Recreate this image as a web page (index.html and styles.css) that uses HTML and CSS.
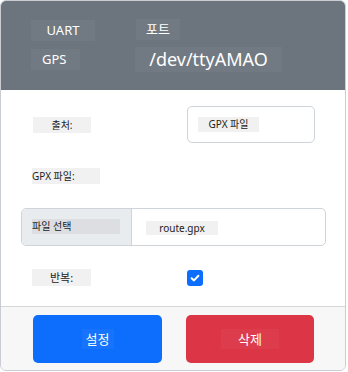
FILE: index.html
```html
<!DOCTYPE html>
<html lang="ko">
  <head>
    <meta charset="UTF-8" />
    <meta name="viewport" content="width=device-width, initial-scale=1.0" />
    <title>GPS 설정</title>
    <link rel="stylesheet" href="styles.css">
  </head>
  <body>
    <div class="card">
      <div class="card-header">
        <div class="head-row">
          <span class="tag tag-uart">UART</span>
          <span class="tag tag-port">포트</span>
        </div>
        <div class="head-row">
          <span class="tag tag-gps">GPS</span>
          <span class="tag tag-dev">/dev/ttyAMAO</span>
        </div>
      </div>

      <div class="card-body">
        <div class="field-row">
          <span class="label label-src">출처:</span>
          <div class="select-box"><span class="chip chip-src">GPX 파일</span></div>
        </div>

        <div class="field-row field-file">
          <span class="label label-gpx">GPX 파일:</span>
        </div>

        <div class="file-group">
          <div class="file-btn"><span class="chip chip-pick">파일 선택</span></div>
          <div class="file-name"><span class="chip chip-route">route.gpx</span></div>
        </div>

        <div class="field-row field-repeat">
          <span class="label label-repeat">반복:</span>
          <span class="check">
            <svg width="12" height="12" viewBox="0 0 12 12">
              <path d="M2.6 6.2 L5 8.4 L9.4 3.8" fill="none" stroke="#fff" stroke-width="2" stroke-linecap="round" stroke-linejoin="round" />
            </svg>
          </span>
        </div>
      </div>

      <div class="card-footer">
        <button class="btn btn-blue"><span class="btn-text">설정</span></button>
        <button class="btn btn-red"><span class="btn-text btn-text-wide">삭제</span></button>
      </div>
    </div>
  </body>
</html>
```

FILE: styles.css
```css
body {
  margin: 0;
  background-color: #fff;
  font-family: "Noto Sans", "Noto Sans CJK KR", sans-serif;
}
.card {
  width: 344px;
  height: 369px;
  border: 1px solid #c9ccd0;
  border-radius: 6px;
  overflow: hidden;
  display: flex;
  flex-direction: column;
  background-color: #fff;
}
.card-header {
  background-color: #6c757d;
  height: 89px;
  box-sizing: border-box;
  padding: 19px 0 0 30px;
  display: flex;
  flex-direction: column;
  gap: 6px;
}
.head-row {
  display: flex;
  align-items: center;
}
.tag {
  color: #fff;
  background-color: rgba(255, 255, 255, 0.04);
  font-size: 13px;
  line-height: 21px;
  height: 21px;
  text-align: center;
}
.tag-uart {
  width: 64px;
}
.tag-port {
  width: 44px;
  margin-left: 41px;
  margin-top: -2px;
}
.tag-gps {
  width: 49px;
  text-align: left;
  padding-left: 11px;
  box-sizing: border-box;
}
.tag-dev {
  width: 147px;
  height: 25px;
  line-height: 25px;
  font-size: 18px;
  margin-left: 55px;
}
.card-body {
  flex: 1;
  padding: 16px 0 0 20px;
}
.field-row {
  display: flex;
  align-items: center;
}
.label {
  background-color: #f1f1f1;
  color: #222;
  font-size: 10px;
  height: 16px;
  line-height: 16px;
  text-align: center;
}
.label-src {
  width: 58px;
  margin-left: 12px;
}
.select-box {
  width: 128px;
  height: 37px;
  box-sizing: border-box;
  border: 1px solid #ced4da;
  border-radius: 5px;
  margin-left: 96px;
  padding: 10px 0 0 10px;
  display: flex;
  align-items: flex-start;
}
.chip {
  display: block;
  background-color: #f1f1f1;
  color: #222;
  font-size: 10px;
  height: 15px;
  line-height: 15px;
  text-align: center;
}
.chip-src {
  width: 61px;
}
.field-file {
  margin-top: 25px;
}
.label-gpx {
  width: 68px;
  margin-left: 11px;
  text-align: left;
}
.file-group {
  margin-top: 24px;
  width: 305px;
  height: 38px;
  box-sizing: border-box;
  border: 1px solid #ced4da;
  border-radius: 5px;
  display: flex;
  overflow: hidden;
}
.file-btn {
  width: 110px;
  background-color: #e9ecef;
  border-right: 1px solid #ced4da;
  padding: 10px 0 0 10px;
  box-sizing: border-box;
  display: flex;
  align-items: flex-start;
}
.chip-pick {
  width: 88px;
  background-color: #dcdee1;
  text-align: left;
}
.file-name {
  padding: 12px 0 0 14px;
  display: flex;
  align-items: flex-start;
}
.chip-route {
  width: 72px;
  height: 14px;
  line-height: 14px;
}
.field-repeat {
  margin-top: 23px;
}
.label-repeat {
  width: 59px;
  height: 17px;
  line-height: 17px;
  font-size: 11px;
  margin-left: 11px;
}
.check {
  width: 16px;
  height: 16px;
  border-radius: 3px;
  background-color: #0d6efd;
  margin-left: 96px;
  display: flex;
  align-items: center;
  justify-content: center;
}
.card-footer {
  height: 64px;
  box-sizing: border-box;
  border-top: 1px solid #d4d6d9;
  background-color: #f7f7f8;
  padding: 8px 0 0 32px;
  display: flex;
  gap: 24px;
}
.btn {
  width: 129px;
  height: 48px;
  border: none;
  border-radius: 5px;
  font-family: inherit;
  padding: 0;
  display: flex;
  align-items: center;
  justify-content: center;
}
.btn-blue {
  background-color: #0d6efd;
}
.btn-red {
  background-color: #dc3545;
  width: 128px;
}
.btn-text {
  color: #fff;
  font-size: 13px;
  line-height: 20px;
  width: 32px;
  text-align: center;
  background-color: rgba(255, 255, 255, 0.04);
}
.btn-text-wide {
  width: 58px;
}
```
